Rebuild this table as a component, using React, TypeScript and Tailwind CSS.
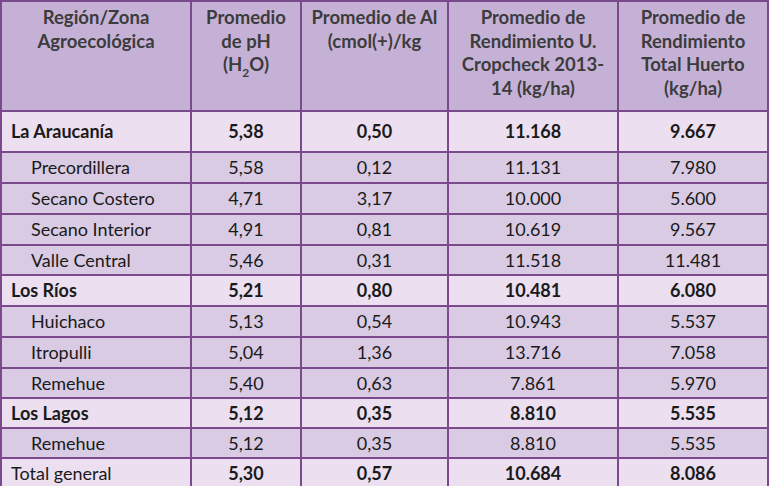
import React from 'react';

interface Row {
  name: string;
  ph: string;
  al: string;
  cropcheck: string;
  huerto: string;
  kind: 'group' | 'sub' | 'total';
  h: string;
}

const rows: Row[] = [
  { name: 'La Araucanía', ph: '5,38', al: '0,50', cropcheck: '11.168', huerto: '9.667', kind: 'group', h: 'h-[39px]' },
  { name: 'Precordillera', ph: '5,58', al: '0,12', cropcheck: '11.131', huerto: '7.980', kind: 'sub', h: 'h-[29px]' },
  { name: 'Secano Costero', ph: '4,71', al: '3,17', cropcheck: '10.000', huerto: '5.600', kind: 'sub', h: 'h-[29px]' },
  { name: 'Secano Interior', ph: '4,91', al: '0,81', cropcheck: '10.619', huerto: '9.567', kind: 'sub', h: 'h-[29px]' },
  { name: 'Valle Central', ph: '5,46', al: '0,31', cropcheck: '11.518', huerto: '11.481', kind: 'sub', h: 'h-[28px]' },
  { name: 'Los Ríos', ph: '5,21', al: '0,80', cropcheck: '10.481', huerto: '6.080', kind: 'group', h: 'h-[29px]' },
  { name: 'Huichaco', ph: '5,13', al: '0,54', cropcheck: '10.943', huerto: '5.537', kind: 'sub', h: 'h-[29px]' },
  { name: 'Itropulli', ph: '5,04', al: '1,36', cropcheck: '13.716', huerto: '7.058', kind: 'sub', h: 'h-[29px]' },
  { name: 'Remehue', ph: '5,40', al: '0,63', cropcheck: '7.861', huerto: '5.970', kind: 'sub', h: 'h-[28px]' },
  { name: 'Los Lagos', ph: '5,12', al: '0,35', cropcheck: '8.810', huerto: '5.535', kind: 'group', h: 'h-[28px]' },
  { name: 'Remehue', ph: '5,12', al: '0,35', cropcheck: '8.810', huerto: '5.535', kind: 'sub', h: 'h-[28px]' },
  { name: 'Total general', ph: '5,30', al: '0,57', cropcheck: '10.684', huerto: '8.086', kind: 'total', h: 'h-[29px]' },
];

const grid = 'grid grid-cols-[188px_108px_145px_168px_148px] gap-[2px]';

function HeaderCell({ children }: { children: React.ReactNode }) {
  return (
    <div className="bg-[#c6b1d6] text-center font-bold text-[18.5px] leading-[23.5px] text-[#3c3c3c] pt-[4px]">
      {children}
    </div>
  );
}

export default function App() {
  return (
    <div className="w-[769px] h-[486px] overflow-hidden bg-white font-['Lato','Liberation_Sans',sans-serif]">
      <div className="bg-[#7b4a8d] p-[2px] flex flex-col gap-[2px]">
        <div className={`${grid} h-[108px]`}>
          <HeaderCell>Región/Zona<br />Agroecológica</HeaderCell>
          <HeaderCell>
            Promedio<br />de pH<br />(H<sub className="text-[12px] align-[-3px]">2</sub>O)
          </HeaderCell>
          <HeaderCell>Promedio de Al<br />(cmol(+)/kg</HeaderCell>
          <HeaderCell>Promedio de<br />Rendimiento U.<br />Cropcheck 2013-<br />14 (kg/ha)</HeaderCell>
          <HeaderCell>Promedio de<br />Rendimiento<br />Total Huerto<br />(kg/ha)</HeaderCell>
        </div>
        {rows.map((r, i) => {
          const bg = r.kind === 'sub' ? 'bg-[#d9cbe3]' : 'bg-[#ebdff0]';
          const numWeight = r.kind === 'sub' ? 'font-normal' : 'font-bold';
          const nameCls =
            r.kind === 'group' ? 'font-bold pl-[9px]' : r.kind === 'sub' ? 'pl-[29px]' : 'pl-[9px]';
          return (
            <div key={i} className={`${grid} ${r.h} text-[18px] text-[#1a1a1a]`}>
              <div className={`${bg} ${nameCls} flex items-center`}>{r.name}</div>
              <div className={`${bg} ${numWeight} flex items-center justify-center`}>{r.ph}</div>
              <div className={`${bg} ${numWeight} flex items-center justify-center`}>{r.al}</div>
              <div className={`${bg} ${numWeight} flex items-center justify-center`}>{r.cropcheck}</div>
              <div className={`${bg} ${numWeight} flex items-center justify-center`}>{r.huerto}</div>
            </div>
          );
        })}
      </div>
    </div>
  );
}
